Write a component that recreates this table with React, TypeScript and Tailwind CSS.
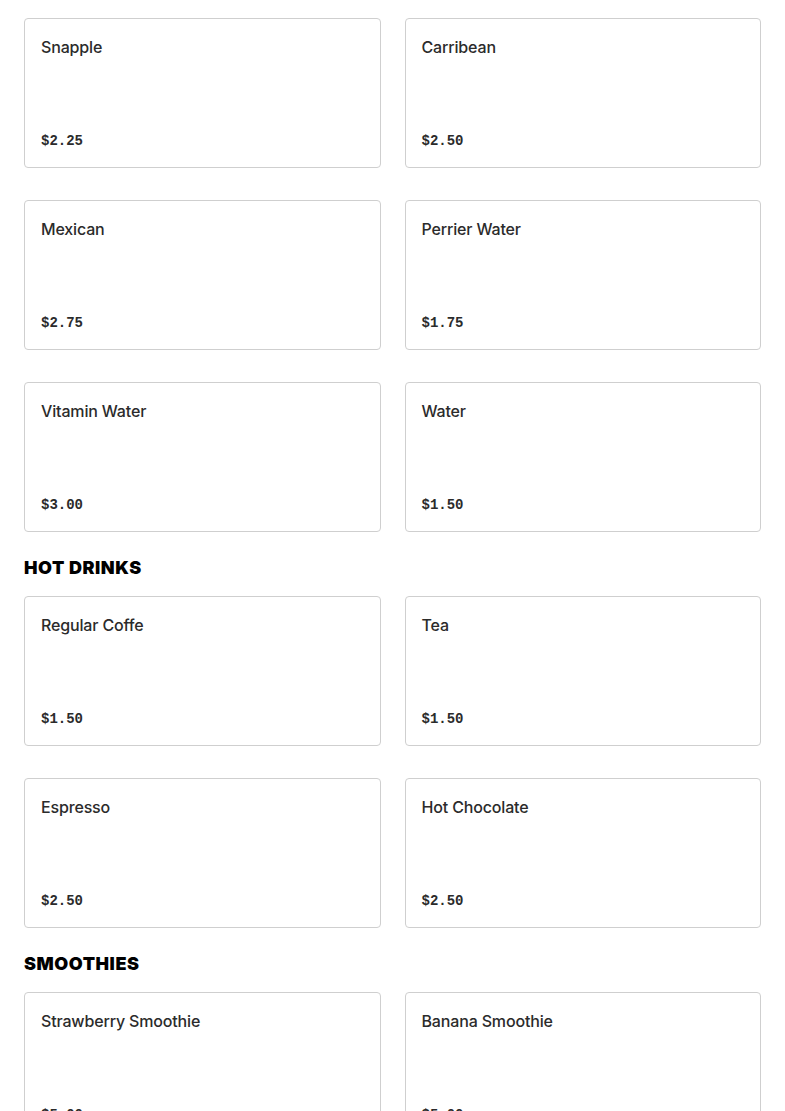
type Item = { name: string; price: string };

const sections: { title?: string; items: Item[] }[] = [
  {
    items: [
      { name: 'Snapple', price: '$2.25' },
      { name: 'Carribean', price: '$2.50' },
      { name: 'Mexican', price: '$2.75' },
      { name: 'Perrier Water', price: '$1.75' },
      { name: 'Vitamin Water', price: '$3.00' },
      { name: 'Water', price: '$1.50' },
    ],
  },
  {
    title: 'HOT DRINKS',
    items: [
      { name: 'Regular Coffe', price: '$1.50' },
      { name: 'Tea', price: '$1.50' },
      { name: 'Espresso', price: '$2.50' },
      { name: 'Hot Chocolate', price: '$2.50' },
    ],
  },
  {
    title: 'SMOOTHIES',
    items: [
      { name: 'Strawberry Smoothie', price: '$5.00' },
      { name: 'Banana Smoothie', price: '$5.00' },
    ],
  },
];

function MenuCard({ name, price }: Item) {
  return (
    <div className="flex h-[150px] flex-col justify-between rounded-[4px] border border-[#cfcfcf] bg-white p-4">
      <p className="text-[16px] leading-6 font-medium tracking-[-0.01em] text-[#2b2b2b]">{name}</p>
      <p className="font-['Liberation_Mono',monospace] text-[14px] leading-5 font-bold text-[#2b2b2b]">
        {price}
      </p>
    </div>
  );
}

export default function App() {
  return (
    <div className="min-h-screen bg-white px-6 pt-[18px] font-['Inter',sans-serif]">
      {sections.map((s, i) => (
        <section key={i}>
          {s.title && (
            <h2 className="mt-[22px] mb-[14px] text-[18px] leading-7 font-black tracking-[0.03em] text-black">
              {s.title}
            </h2>
          )}
          <div className="grid grid-cols-2 gap-x-6 gap-y-8">
            {s.items.map((it) => (
              <MenuCard key={it.name} {...it} />
            ))}
          </div>
        </section>
      ))}
    </div>
  );
}
